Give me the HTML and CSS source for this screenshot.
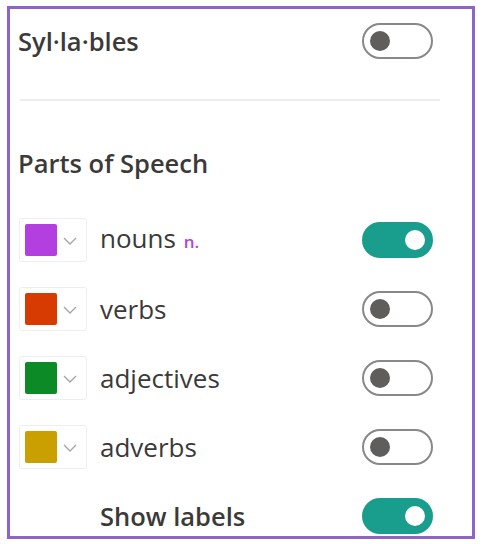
FILE: index.html
```html
<!DOCTYPE html>
<html lang="en">
<head>
<meta charset="utf-8">
<title>Grammar options</title>
<link rel="stylesheet" href="styles.css">
</head>
<body>
<div class="panel">
  <div class="row top-row">
    <span class="heading">Syl·la·bles</span>
    <span class="toggle off"><span class="knob"></span></span>
  </div>
  <div class="divider"></div>
  <div class="heading section-title">Parts of Speech</div>
  <div class="list">
    <div class="row item">
      <span class="picker"><span class="swatch purple"></span><svg class="chev" viewBox="0 0 14 8" width="14" height="8"><path d="M1 1l6 6 6-6" fill="none" stroke="#a8a6a4" stroke-width="1.4"/></svg></span>
      <span class="label">nouns <span class="abbr">n.</span></span>
      <span class="toggle on"><span class="knob"></span></span>
    </div>
    <div class="row item">
      <span class="picker"><span class="swatch red"></span><svg class="chev" viewBox="0 0 14 8" width="14" height="8"><path d="M1 1l6 6 6-6" fill="none" stroke="#a8a6a4" stroke-width="1.4"/></svg></span>
      <span class="label">verbs</span>
      <span class="toggle off"><span class="knob"></span></span>
    </div>
    <div class="row item">
      <span class="picker"><span class="swatch green"></span><svg class="chev" viewBox="0 0 14 8" width="14" height="8"><path d="M1 1l6 6 6-6" fill="none" stroke="#a8a6a4" stroke-width="1.4"/></svg></span>
      <span class="label">adjectives</span>
      <span class="toggle off"><span class="knob"></span></span>
    </div>
    <div class="row item">
      <span class="picker"><span class="swatch gold"></span><svg class="chev" viewBox="0 0 14 8" width="14" height="8"><path d="M1 1l6 6 6-6" fill="none" stroke="#a8a6a4" stroke-width="1.4"/></svg></span>
      <span class="label">adverbs</span>
      <span class="toggle off"><span class="knob"></span></span>
    </div>
    <div class="row item">
      <span class="picker-space"></span>
      <span class="label strong">Show labels</span>
      <span class="toggle on"><span class="knob"></span></span>
    </div>
  </div>
</div>
</body>
</html>
```

FILE: styles.css
```css
* { box-sizing: border-box; }
html, body { margin: 0; padding: 0; background: #ffffff; }
body {
  font-family: "Open Sans", "Noto Sans", "Liberation Sans", sans-serif;
  color: #3b3a39;
}
.panel {
  margin: 6px 0 0 7px;
  width: 468px;
  height: 533px;
  border: 3px solid #8e64c8;
  padding: 14px 0 0 8px;
}
.row {
  display: flex;
  align-items: center;
  width: 415px;
}
.top-row {
  height: 36px;
  justify-content: space-between;
}
.heading {
  font-size: 25.5px;
  font-weight: 600;
  color: #3b3a39;
  line-height: 30px;
}
.divider {
  margin: 40px 0 0 2px;
  width: 420px;
  height: 2px;
  background: #ededed;
}
.section-title {
  margin-top: 47px;
}
.list {
  margin-top: 40px;
  display: flex;
  flex-direction: column;
  gap: 25px;
}
.item { height: 44px; }
.picker {
  display: flex;
  align-items: center;
  width: 68px;
  height: 44px;
  border: 1px solid #eeeeee;
  border-radius: 3px;
  padding-left: 5px;
  margin-left: 1px;
}
.picker-space { width: 69px; }
.swatch {
  width: 32px;
  height: 32px;
  border-radius: 2px;
}
.purple { background: #b43fe0; }
.red { background: #d83b01; }
.green { background: #0c8a25; }
.gold { background: #c9a000; }
.chev { margin-left: 6px; margin-top: 2px; }
.label {
  margin-left: 13px;
  font-size: 26px;
  font-weight: 500;
  line-height: 30px;
  flex: 1;
}
.label.strong { font-weight: 600; font-size: 25.5px; }
.abbr {
  font-size: 17px;
  font-weight: 600;
  color: #b146d6;
  margin-left: 1px;
}
.toggle {
  position: relative;
  width: 71px;
  height: 36px;
  border-radius: 18px;
  flex: none;
}
.toggle.off { border: 2px solid #8a8886; background: #fff; }
.toggle.on { background: #199d8c; border: 2px solid #199d8c; }
.knob {
  position: absolute;
  top: 6px;
  width: 20px;
  height: 20px;
  border-radius: 50%;
}
.off .knob { left: 6px; background: #605e5c; }
.on .knob { right: 6px; background: #ffffff; }
```
